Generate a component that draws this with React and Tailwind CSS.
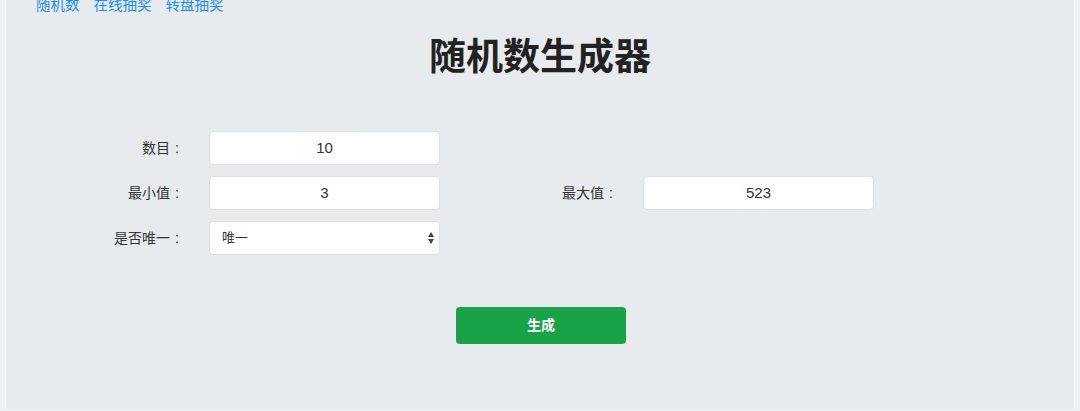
import React from "react";

const font = { fontFamily: '"Liberation Sans", "Noto Sans CJK SC", sans-serif' };

function Label({ children }) {
  return (
    <div className="w-[173px] text-right text-[14px] text-[#333] leading-[34px]">
      {children}
      <span className="ml-[5px]">:</span>
    </div>
  );
}

function Input({ value }) {
  return (
    <div className="ml-[30px] w-[231px] h-[34px] bg-white border border-[#dcdfe3] rounded-[4px] flex items-center justify-center text-[15px] text-[#333]">
      {value}
    </div>
  );
}

export default function App() {
  return (
    <div className="w-[1080px] h-[411px] bg-[#edf0f2] overflow-hidden" style={font}>
      <div className="mx-[5px] h-[411px] bg-[#e8ebee] border-x border-[#f5f6f8]">
        <div className="flex gap-[14px] pl-[30px] -mt-[2px] text-[14.5px] leading-[14px] text-[#1a8cff]">
          <span>随机数</span>
          <span>在线抽奖</span>
          <span>转盘抽奖</span>
        </div>
        <h1 className="mt-[21px] text-center text-[37px] leading-[50px] font-bold text-[#222]">随机数生成器</h1>
        <div className="mt-[48px] flex flex-col gap-[11px]">
          <div className="flex">
            <Label>数目</Label>
            <Input value="10" />
          </div>
          <div className="flex">
            <Label>最小值</Label>
            <Input value="3" />
            <Label>最大值</Label>
            <Input value="523" />
          </div>
          <div className="flex">
            <Label>是否唯一</Label>
            <div className="ml-[30px] w-[231px] h-[34px] bg-white border border-[#dcdfe3] rounded-[4px] flex items-center justify-between pl-[12px] pr-[5px] text-[13px] text-[#333]">
              <span>唯一</span>
              <svg width="6" height="12" viewBox="0 0 6 12">
                <path d="M3 0 L6 5 L0 5 Z" fill="#444" />
                <path d="M3 12 L6 7 L0 7 Z" fill="#444" />
              </svg>
            </div>
          </div>
        </div>
        <div className="mt-[52px] flex justify-center">
          <button className="w-[170px] h-[37px] bg-[#19a248] rounded-[4px] text-white text-[14px] font-bold ml-[2px]">
            生成
          </button>
        </div>
      </div>
    </div>
  );
}
